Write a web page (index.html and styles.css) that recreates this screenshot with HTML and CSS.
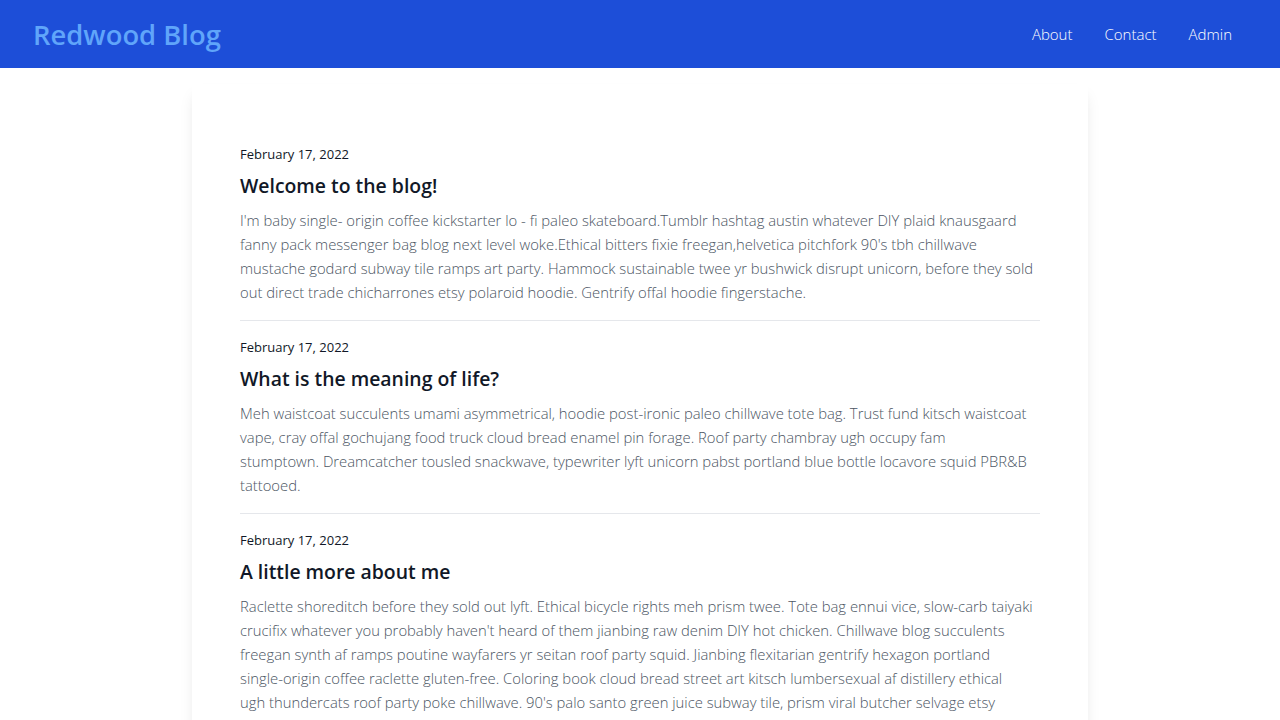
FILE: index.html
```html
<!DOCTYPE html>
<html lang="en">
<head>
<meta charset="utf-8">
<title>Redwood Blog</title>
<link rel="stylesheet" href="styles.css">
</head>
<body>
<header class="site-header">
  <a class="logo" href="#">Redwood Blog</a>
  <nav class="nav">
    <a class="nav-link" href="#">About</a>
    <a class="nav-link" href="#">Contact</a>
    <a class="nav-link" href="#">Admin</a>
  </nav>
</header>
<main class="card">
  <article class="post">
    <div class="post-date">February 17, 2022</div>
    <h2 class="post-title">Welcome to the blog!</h2>
    <p class="post-body">I'm baby single- origin coffee kickstarter lo - fi paleo skateboard.Tumblr hashtag austin whatever DIY plaid knausgaard<br>
    fanny pack messenger bag blog next level woke.Ethical bitters fixie freegan,helvetica pitchfork 90's tbh chillwave<br>
    mustache godard subway tile ramps art party. Hammock sustainable twee yr bushwick disrupt unicorn, before they sold<br>
    out direct trade chicharrones etsy polaroid hoodie. Gentrify offal hoodie fingerstache.</p>
  </article>
  <article class="post">
    <div class="post-date">February 17, 2022</div>
    <h2 class="post-title">What is the meaning of life?</h2>
    <p class="post-body">Meh waistcoat succulents umami asymmetrical, hoodie post-ironic paleo chillwave tote bag. Trust fund kitsch waistcoat<br>
    vape, cray offal gochujang food truck cloud bread enamel pin forage. Roof party chambray ugh occupy fam<br>
    stumptown. Dreamcatcher tousled snackwave, typewriter lyft unicorn pabst portland blue bottle locavore squid PBR&amp;B<br>
    tattooed.</p>
  </article>
  <article class="post">
    <div class="post-date">February 17, 2022</div>
    <h2 class="post-title">A little more about me</h2>
    <p class="post-body">Raclette shoreditch before they sold out lyft. Ethical bicycle rights meh prism twee. Tote bag ennui vice, slow-carb taiyaki<br>
    crucifix whatever you probably haven't heard of them jianbing raw denim DIY hot chicken. Chillwave blog succulents<br>
    freegan synth af ramps poutine wayfarers yr seitan roof party squid. Jianbing flexitarian gentrify hexagon portland<br>
    single-origin coffee raclette gluten-free. Coloring book cloud bread street art kitsch lumbersexual af distillery ethical<br>
    ugh thundercats roof party poke chillwave. 90's palo santo green juice subway tile, prism viral butcher selvage etsy</p>
  </article>
</main>
</body>
</html>
```
FILE: styles.css
```css
* { box-sizing: border-box; }

body {
  margin: 0;
  background: #ffffff;
  font-family: "Open Sans", "Noto Sans", sans-serif;
  color: #111827;
}

.site-header {
  display: flex;
  justify-content: space-between;
  align-items: center;
  background: #1d4ed8;
  padding: 16px 32px;
  height: 68px;
}

.logo {
  font-size: 27.4px;
  font-weight: 600;
  line-height: 36px;
  color: #60a5fa;
  text-decoration: none;
  margin: 2px 0 0 1px;
}

.nav {
  display: flex;
  align-items: center;
}

.nav-link {
  padding: 0 16px;
  font-size: 15px;
  font-weight: 300;
  line-height: 24px;
  color: #ffffff;
  text-decoration: none;
}

.card {
  max-width: 896px;
  margin: 16px auto 0;
  padding: 60px 48px 48px;
  background: #ffffff;
  box-shadow: 0 10px 15px -3px rgba(0, 0, 0, 0.1), 0 4px 6px -4px rgba(0, 0, 0, 0.1);
}

.post {
  padding-bottom: 16px;
  border-bottom: 1px solid #e5e7eb;
}

.post + .post {
  padding-top: 16px;
}

.post-date {
  font-size: 13px;
  line-height: 20px;
  color: #111827;
}

.post-title {
  margin: 8px 0 0;
  font-size: 19.4px;
  font-weight: 600;
  line-height: 28px;
  color: #111827;
}

.post-body {
  margin: 8px 0 0;
  font-size: 14.8px;
  font-weight: 300;
  line-height: 24px;
  color: #4b5563;
}
```
